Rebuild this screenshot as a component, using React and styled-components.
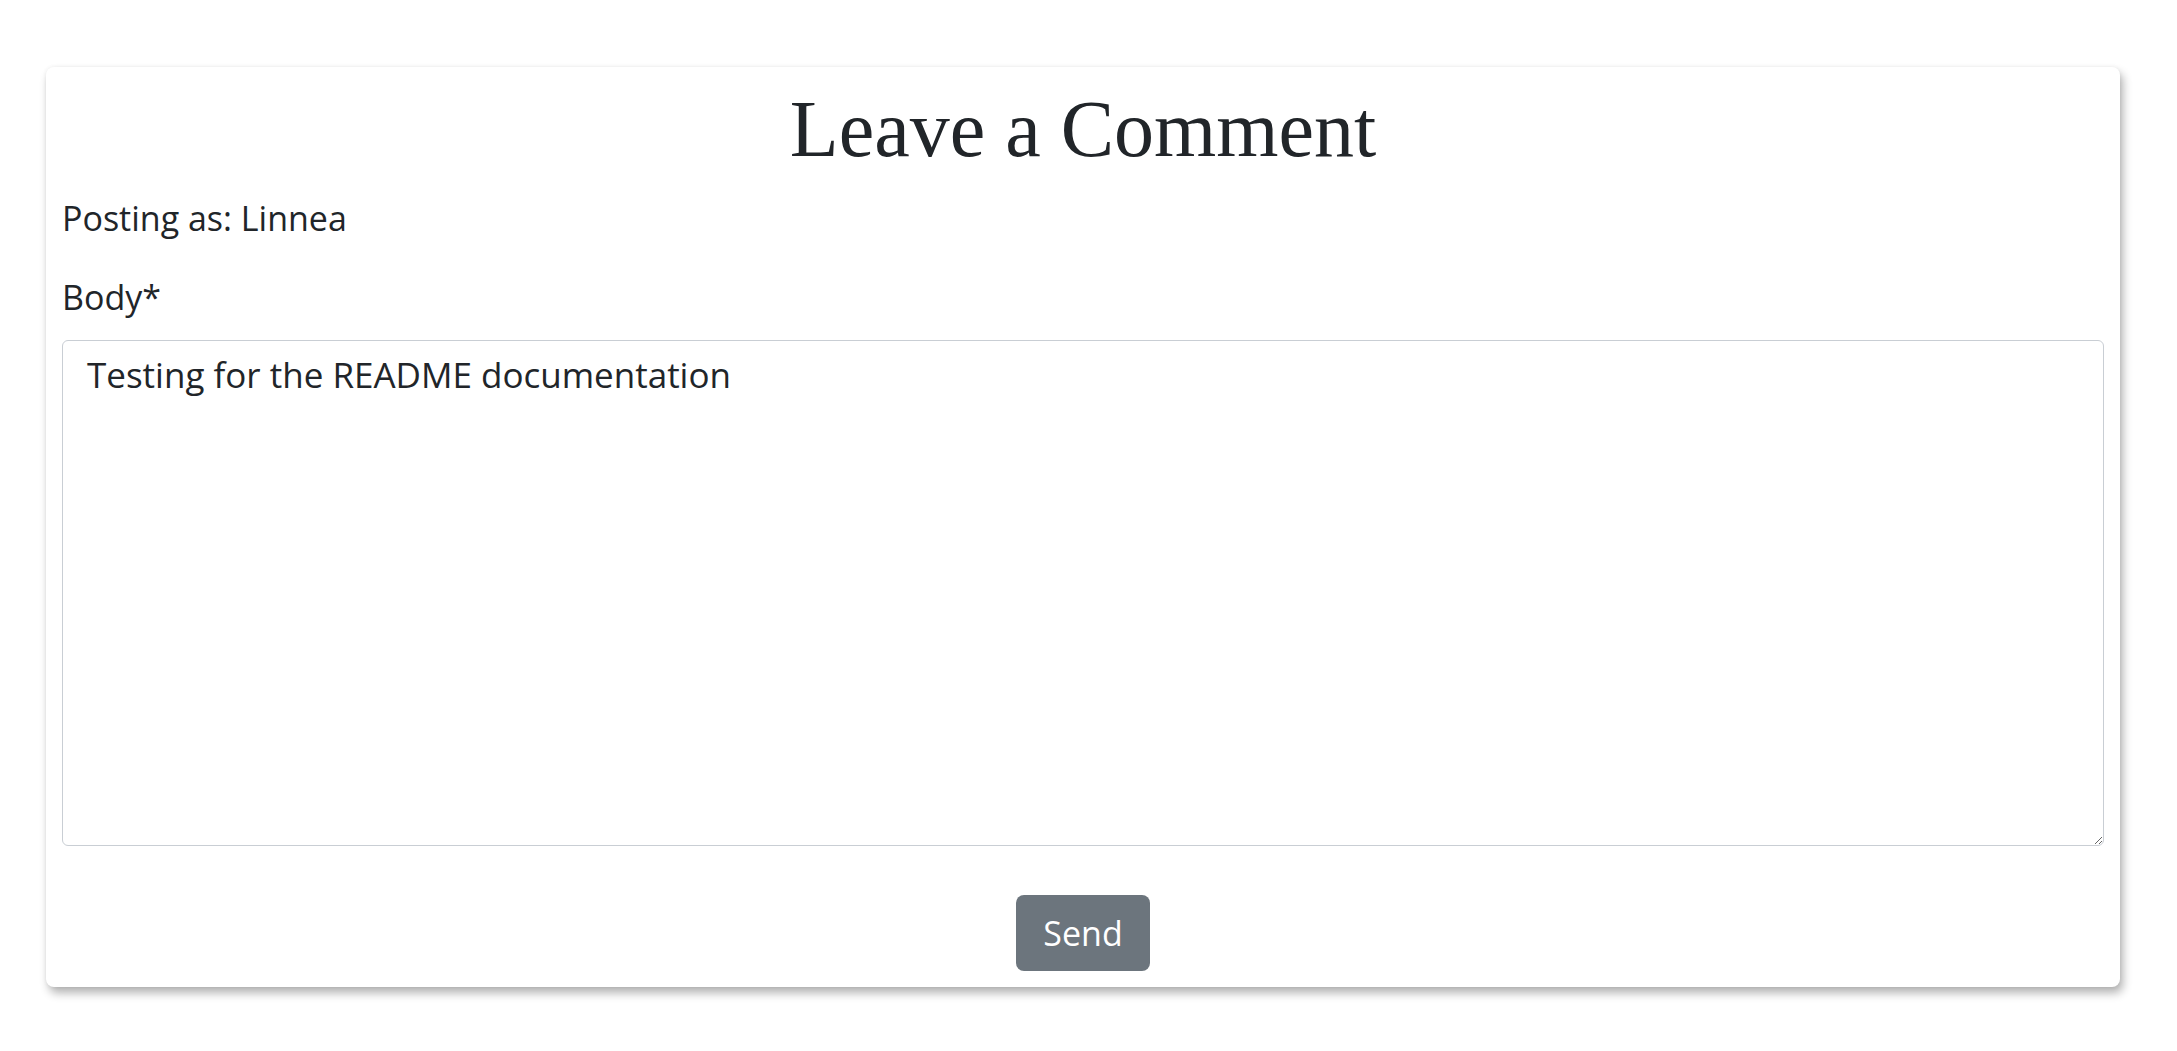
import React from 'react'
import styled, { createGlobalStyle } from 'styled-components'

const GlobalStyle = createGlobalStyle`
  html, body {
    margin: 0;
    padding: 0;
    background: #fff;
  }
  body {
    font-family: "Open Sans", Lato, sans-serif;
    color: #212529;
  }
  * {
    box-sizing: border-box;
  }
`

const Page = styled.div`
  padding: 67px 57px 40px 46px;
`

const Card = styled.form`
  display: flex;
  flex-direction: column;
  padding: 14px 16px 16px;
  background: #fff;
  border-radius: 8px;
  box-shadow: 3px 6px 10px rgba(0, 0, 0, 0.3), 0 0 4px rgba(0, 0, 0, 0.06);
`

const Title = styled.h1`
  margin: 0;
  text-align: center;
  font-family: "Liberation Serif", "Times New Roman", serif;
  font-weight: 400;
  font-size: 80px;
  line-height: 96px;
  color: #212529;
`

const Line = styled.p`
  margin: ${(p) => p.$top}px 0 0;
  font-size: 34px;
  line-height: 40px;
`

const TextArea = styled.textarea`
  display: block;
  width: 100%;
  height: 506px;
  margin-top: 23px;
  padding: 13px 24px 9px;
  border: 1px solid #c9ced4;
  border-radius: 6px;
  font-family: "Open Sans", Lato, sans-serif;
  font-size: 35px;
  line-height: 42px;
  color: #212529;
  resize: vertical;
  outline: none;
`

const Actions = styled.div`
  display: flex;
  justify-content: center;
  margin-top: 49px;
`

const SendButton = styled.button`
  width: 134px;
  height: 76px;
  padding: 0;
  border: none;
  border-radius: 8px;
  background: #6c757d;
  color: #fff;
  font-family: "Open Sans", Lato, sans-serif;
  font-size: 34px;
  cursor: pointer;
`

function App() {
  return (
    <>
      <GlobalStyle />
      <Page>
        <Card onSubmit={(e) => e.preventDefault()}>
          <Title>Leave a Comment</Title>
          <Line $top={21}>Posting as: Linnea</Line>
          <Line $top={39}>Body*</Line>
          <TextArea defaultValue="Testing for the README documentation" />
          <Actions>
            <SendButton type="submit">Send</SendButton>
          </Actions>
        </Card>
      </Page>
    </>
  )
}

export default App
